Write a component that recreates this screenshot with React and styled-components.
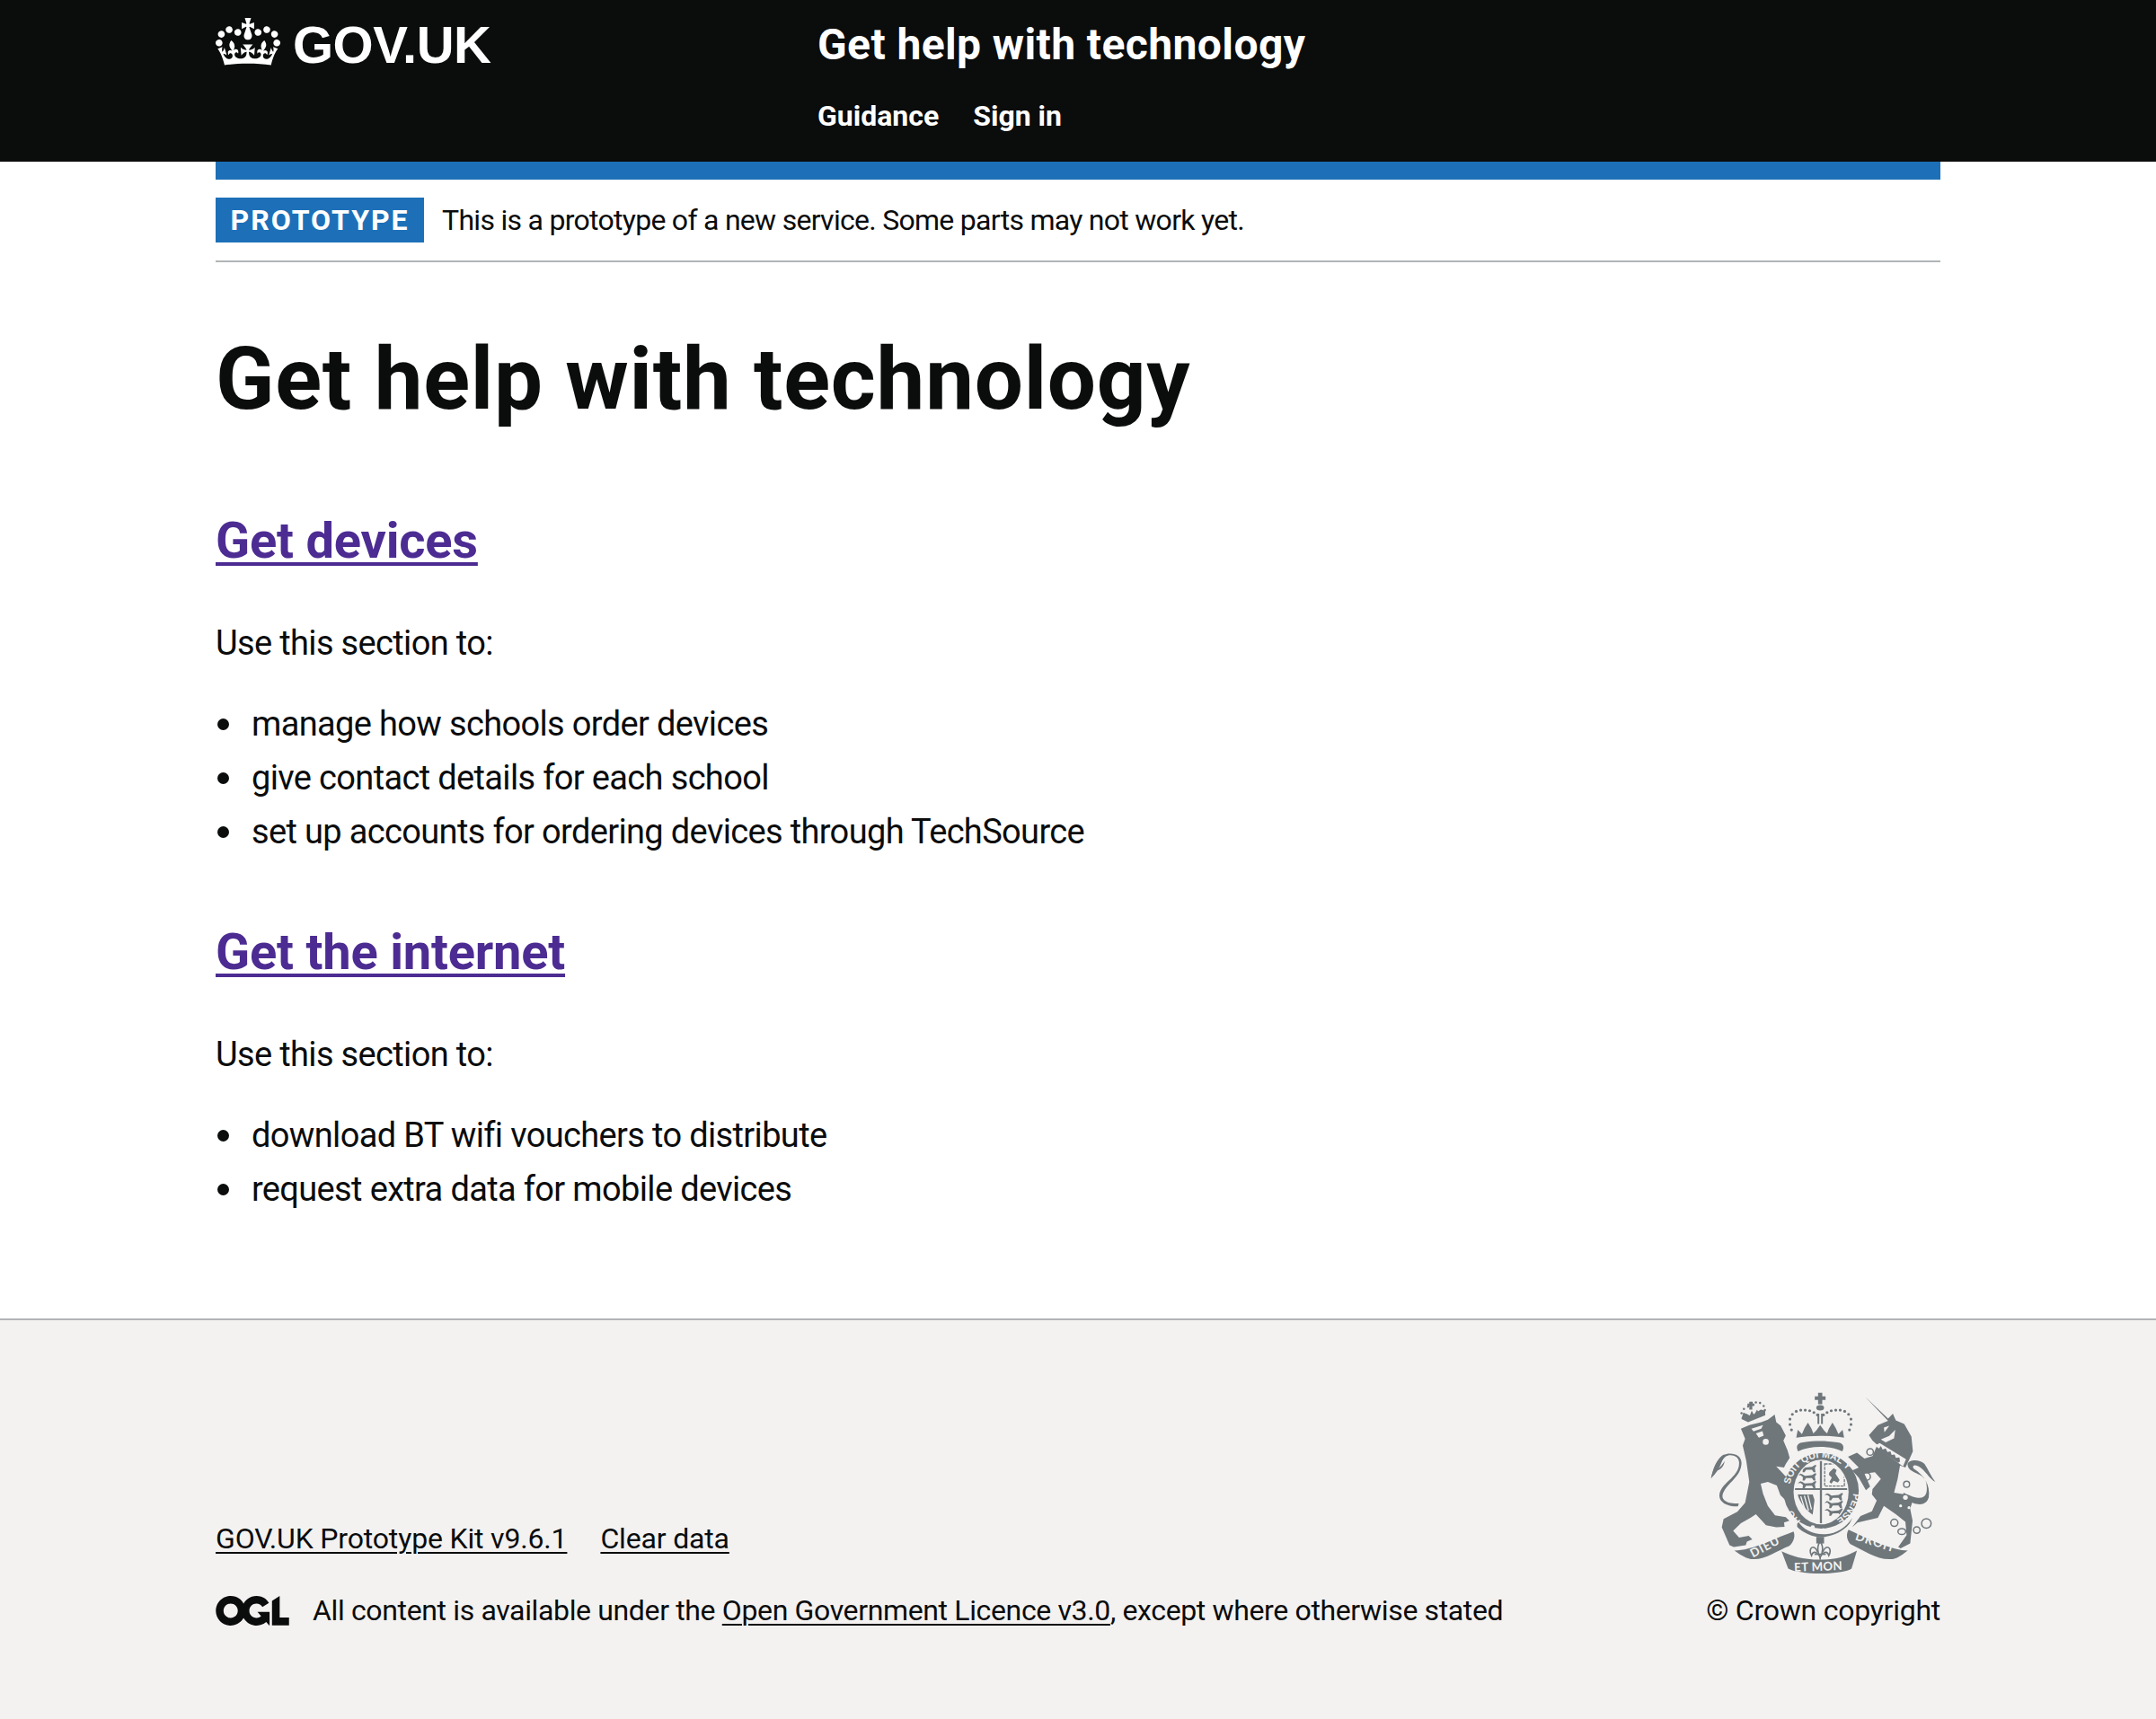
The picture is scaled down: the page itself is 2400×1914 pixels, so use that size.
import React from "react";
import styled, { createGlobalStyle } from "styled-components";

const Global = createGlobalStyle`
  html, body { margin: 0; padding: 0; background: #fff; }
  body { font-family: Roboto, "Noto Sans", "Liberation Sans", sans-serif; color: #0b0c0c; }
`;
const Header = styled.header`background: #0b0c0c; height: 180px; color: #fff;`;
const Width = styled.div`width: 1920px; margin: 0 auto;`;
const HeaderRow = styled(Width)`display: flex; padding-top: 20px;`;
const Logo = styled.a`width: 670px; display: flex; gap: 14px; color: #fff; text-decoration: none; align-items: flex-start;`;
const LogoText = styled.span`font: 700 58px/60px "Liberation Sans", Arial, sans-serif; letter-spacing: -0.5px;`;
const ServiceBlock = styled.div`display: flex; flex-direction: column;`;
const ServiceName = styled.a`font-size: 48px; line-height: 60px; font-weight: 700; color: #fff; text-decoration: none; letter-spacing: 0.4px;`;
const Nav = styled.nav`display: flex; gap: 38px; margin-top: 29px;`;
const NavLink = styled.a`font-size: 32px; line-height: 40px; font-weight: 700; color: #fff; text-decoration: none;`;
const Page = styled(Width)`border-top: 20px solid #1d70b8;`;
const Banner = styled.div`display: flex; align-items: center; gap: 20px; padding: 20px 0; border-bottom: 2px solid #b1b4b6;`;
const Tag = styled.strong`background: #1d70b8; color: #fff; font-size: 32px; line-height: 50px; height: 50px; padding: 0 16.5px; letter-spacing: 2px; font-weight: 700;`;
const BannerText = styled.span`font-size: 32px; line-height: 50px; letter-spacing: -0.72px;`;
const Main = styled.main`padding-top: 70px; height: 1176px; box-sizing: border-box;`;
const Title = styled.h1`margin: 0 0 90px; font-size: 96px; line-height: 120px; font-weight: 700; letter-spacing: 0.75px;`;
const Heading = styled.h2`margin: 0 0 59px; font-size: 56px; line-height: 60px; font-weight: 700; letter-spacing: -0.2px;`;
const HeadingLink = styled.a`color: #4c2c92; text-decoration: underline; text-decoration-thickness: 4px; text-underline-offset: 5px;`;
const Body = styled.p`margin: 0 0 40px; font-size: 38px; line-height: 50px; letter-spacing: -0.65px;`;
const List = styled.ul`margin: 0 0 79px; padding: 0; list-style: none; font-size: 38px; line-height: 50px; letter-spacing: -0.65px;`;
const Item = styled.li`
  display: flex; align-items: center; margin-bottom: 10px;
  &::before { content: ""; width: 13px; height: 13px; border-radius: 50%; background: #0b0c0c; margin: 0 25px 0 2px; flex: none; }
`;
const Footer = styled.footer`background: #f3f2f1; border-top: 2px solid #b1b4b6; height: 446px; box-sizing: border-box;`;
const FooterRow = styled(Width)`display: flex; justify-content: space-between; align-items: flex-end; padding-top: 80px;`;
const FooterLeft = styled.div`display: flex; flex-direction: column;`;
const FooterLinks = styled.div`display: flex; gap: 37px; margin-bottom: 40px; letter-spacing: -0.17px;`;
const FooterLink = styled.a`font-size: 32px; line-height: 40px; color: #0b0c0c; text-decoration: underline; text-decoration-thickness: 2px; text-underline-offset: 4px;`;
const Licence = styled.div`display: flex; align-items: center; gap: 26px; font-size: 32px; line-height: 40px; letter-spacing: -0.36px;`;
const Copyright = styled.div`display: flex; flex-direction: column; align-items: flex-end; gap: 18px;`;
const CopyText = styled.a`font-size: 32px; line-height: 40px; color: #0b0c0c; text-decoration: none; letter-spacing: -0.25px;`;
const CrestSvg = styled.svg`display: block; margin-right: 3px;`;

const CROWN = "M25 30.2c3.5 1.5 7.7-.2 9.1-3.7 1.5-3.6-.2-7.8-3.9-9.2-3.6-1.4-7.6.3-9.1 3.9-1.4 3.5.3 7.5 3.9 9zM9 39.5c3.6 1.5 7.8-.2 9.2-3.7 1.5-3.6-.2-7.8-3.9-9.1-3.6-1.5-7.6.2-9.1 3.8-1.4 3.5.3 7.5 3.8 9zM4.4 57.2c3.5 1.5 7.7-.2 9.1-3.8 1.5-3.6-.2-7.7-3.9-9.1-3.5-1.5-7.6.3-9.1 3.8-1.4 3.5.3 7.6 3.9 9.1zm38.3-21.4c3.5 1.5 7.7-.2 9.1-3.8 1.5-3.6-.2-7.7-3.9-9.1-3.6-1.5-7.6.3-9.1 3.8-1.3 3.6.4 7.7 3.9 9.1zm64.4-5.6c-3.6 1.5-7.8-.2-9.1-3.7-1.5-3.6.2-7.8 3.8-9.2 3.6-1.4 7.7.3 9.2 3.9 1.3 3.5-.4 7.5-3.9 9zm15.9 9.3c-3.6 1.5-7.7-.2-9.1-3.7-1.5-3.6.2-7.8 3.7-9.1 3.6-1.5 7.7.2 9.2 3.8 1.5 3.5-.3 7.5-3.8 9zm4.7 17.7c-3.6 1.5-7.8-.2-9.2-3.8-1.5-3.6.2-7.7 3.9-9.1 3.6-1.5 7.7.3 9.2 3.8 1.3 3.5-.4 7.6-3.9 9.1zM89.3 35.8c-3.6 1.5-7.8-.2-9.2-3.8-1.4-3.6.2-7.7 3.9-9.1 3.6-1.5 7.7.3 9.2 3.8 1.4 3.6-.3 7.7-3.9 9.1zM69.7 17.7l8.9 4.7V9.3l-8.9 2.8c-.2-.3-.5-.6-.9-.9L72.4 0H59.6l3.5 11.2c-.3.3-.6.5-.9.9l-8.8-2.8v13.1l8.8-4.7c.3.3.6.7.9.9l-5 15.4v.1c-.2.8-.4 1.6-.4 2.4 0 4.1 3.1 7.5 7 8.1h.2c.3 0 .7.1 1 .1.4 0 .7 0 1-.1h.2c4-.6 7.1-4.1 7.1-8.1 0-.8-.1-1.7-.4-2.4V34l-5.1-15.4c.4-.2.7-.6 1-.9zM66 92.8c16.9 0 32.8 1.1 47.1 3.2 4-16.9 8.9-26.7 14-33.5l-9.6-3.4c1 4.9 1.1 7.2 0 10.2-1.5-1.4-3-4.3-4.2-8.7L108.6 76c2.8-2 5-3.2 7.5-3.3-4.4 9.4-10 11.9-13.6 11.2-4.3-.8-6.3-4.6-5.6-7.9 1-4.7 5.7-5.9 8-.5 4.3-8.7-3-11.4-7.6-8.8 7.1-7.2 7.9-13.5 2.1-21.1-8 6.1-8.1 12.3-4.5 20.8-4.7-5.4-12.1-2.5-9.5 6.2 3.4-5.2 7.9-2 7.2 3.1-.6 4.3-6.4 7.8-13.5 7.2-10.3-.9-10.9-8-11.2-13.8 2.5-.5 7.1 1.8 11 7.3L80.2 60c-4.1 4.4-8 5.3-12.3 5.4 1.4-4.4 8-11.6 8-11.6H55.5s6.4 7.2 7.9 11.6c-4.2-.1-8-1-12.3-5.4l1.4 16.4c3.9-5.5 8.5-7.7 10.9-7.3-.3 5.8-.9 12.8-11.1 13.8-7.2.6-12.9-2.9-13.5-7.2-.7-5 3.8-8.3 7.1-3.1 2.7-8.7-4.6-11.6-9.4-6.2 3.7-8.5 3.6-14.7-4.6-20.8-5.8 7.6-5 13.9 2.2 21.1-4.7-2.6-11.9.1-7.7 8.8 2.3-5.5 7.1-4.2 8.1.5.7 3.3-1.3 7.1-5.7 7.9-3.5.7-9-1.8-13.5-11.2 2.5.1 4.7 1.3 7.5 3.3l-4.7-15.4c-1.2 4.4-2.7 7.2-4.3 8.7-1.1-3-.9-5.3 0-10.2l-9.5 3.4c5 6.9 9.9 16.7 14 33.5 14.8-2.1 30.8-3.2 47.7-3.2z";
const OGL = "M421.5 142.8V.1l-50.7 32.3v161.1h112.4v-50.7zm-122.3-9.6A47.12 47.12 0 0 1 221 97.8c0-26 21.1-47.1 47.1-47.1 16.7 0 31.4 8.7 39.7 21.8l42.7-27.2A97.63 97.63 0 0 0 268.1 0c-36.5 0-68.3 20.1-85.1 49.7A98 98 0 0 0 97.8 0C43.9 0 0 43.9 0 97.8s43.9 97.8 97.8 97.8c36.5 0 68.3-20.1 85.1-49.7a97.76 97.76 0 0 0 149.6 25.4l19.4 22.2h3v-87.8h-80l24.3 27.5zM97.8 145c-26 0-47.1-21.1-47.1-47.1s21.1-47.1 47.1-47.1 47.2 21 47.2 47S123.8 145 97.8 145";

const lionPass = (x, y, s = 1) => `M${x},${y + 6 * s} l${8 * s},${-6 * s} l${6 * s},${2 * s} l${8 * s},${5 * s} l${22 * s},${-2 * s} l${10 * s},${-6 * s} l${4 * s},${2 * s} l${-5 * s},${8 * s} l${2 * s},${13 * s} l${-6 * s},0 l${-5 * s},${-8 * s} l${-18 * s},0 l${-5 * s},${8 * s} l${-6 * s},0 l${1 * s},${-11 * s} l${-7 * s},${-6 * s} Z`;

const Crest = () => {
  const dark = "#6f777b", light = "#f3f2f1";
  const arch = [[341,186],[336,168],[336,150],[344,134],[357,124],[372,120],[387,120],[402,122],[416,128],[428,136],[448,136],[460,128],[474,122],[489,120],[504,120],[519,124],[532,134],[540,150],[540,168],[535,186]];
  const mini = [[178,146],[174,130],[182,116],[196,108],[208,96],[222,94],[236,96],[248,106],[252,120],[250,134]];
  return (
    <CrestSvg width="253" height="205" viewBox="70 60 760 615">
      <g fill={dark}>
        <path d="M172,182 L200,170 L240,160 L262,152 L285,135 L290,160 L305,172 L322,205 L314,222 L328,255 L335,280 L322,300 L316,312 L290,308 L322,342 L338,385 L348,405 L338,424 L322,422 L304,404 L292,372 L262,360 L238,366 L246,400 L262,440 L286,472 L322,478 L334,490 L316,496 L318,510 L290,512 L256,505 L222,468 L204,480 L172,498 L146,524 L166,546 L198,540 L210,552 L192,560 L188,572 L148,578 L134,572 L108,512 L114,484 L160,460 L186,430 L200,360 L190,290 L178,238 L186,216 Z" />
        <path d="M174,150 L180,128 L206,140 L238,118 L254,122 L252,138 L196,160 Z" />
        <path d="M162,442 C118,444 84,420 108,382 C128,352 166,336 166,296 C166,272 135,265 120,276 C104,290 92,325 72,348 C80,318 90,285 112,270 C140,258 175,268 174,298 C172,340 136,358 116,390 C98,420 125,434 165,432 Z" />
        <path d="M72,348 C78,316 92,282 115,270 C108,290 106,315 72,348 Z" />
        <path d="M85,322 C100,316 108,304 118,290 C114,310 104,322 85,322 Z" />
        <path d="M588,76 L664,148 L680,132 L690,154 L718,166 L742,208 L747,258 L735,285 L722,312 L704,305 L696,350 L684,396 L722,402 L746,424 L738,450 L746,490 L738,566 L706,582 L698,578 L726,538 L722,494 L690,468 L650,440 L630,480 L562,496 L544,512 L572,474 L610,458 L626,422 L610,402 L612,384 L640,350 L620,328 L585,332 L604,376 L590,388 L566,346 L544,322 L566,312 L530,276 L560,262 L585,282 L612,274 L628,236 L612,222 L600,204 L630,170 L664,156 Z" />
        <path d="M716,396 C782,430 800,412 792,364 C785,326 730,335 729,300 C735,284 770,284 786,300 C798,318 808,342 822,360 C804,350 794,330 775,314 C755,298 742,304 750,316 C786,340 806,372 800,412 C790,444 758,440 712,414 Z" />
      </g>
      <g fill={light}>
        <circle cx="255" cy="226" r="10" />
        <path d="M207,182 L246,170 L240,182 L214,191 Z" />
        <path d="M222,198 L244,190 L248,205 L232,212 Z" />
        <path d="M650,178 L668,172 L652,194 Z" />
        <path d="M640,218 L668,206 L688,186 L684,214 L656,228 Z" />
        <path d="M620,238 L636,230 L724,284 L714,308 Z" />
        <circle cx="722" cy="412" r="8" />
        <circle cx="706" cy="440" r="5" />
        <circle cx="734" cy="446" r="5" />
      </g>
      <path d="M632,250 l8,-10 l6,12 l10,-4 l6,12 l10,-2 l4,12 l10,-2 l4,12 l12,-2 l2,14 l-6,4 Z" fill={dark} />
      <g fill="none" stroke={dark} strokeWidth="4.5">
        <circle cx="604" cy="260" r="11" />
        <circle cx="592" cy="342" r="13" />
        <circle cx="726" cy="368" r="10" />
        <circle cx="685" cy="497" r="12" />
        <ellipse cx="710" cy="526" rx="13" ry="10" />
        <circle cx="760" cy="521" r="11" />
        <circle cx="792" cy="499" r="16" />
      </g>
      <g fill={dark}>
        {mini.map(([x, y], i) => <circle key={i} cx={x} cy={y} r="3.8" />)}
        <path d="M200,92 h10 v6 h7 v8 h-7 v12 h-10 v-12 h-6 v-8 h6 Z" />
        <path d="M185,148 L192,132 L200,142 L208,122 L216,136 L226,118 L232,130 L244,118 L244,134 Z" />
      </g>
      <g fill={dark}>
        {arch.map(([x, y], i) => <circle key={i} cx={x} cy={y} r="4.8" />)}
        <path d="M430,62 h14 v12 h11 v12 h-11 v14 h-14 v-14 h-11 v-12 h11 Z" />
        <ellipse cx="437" cy="112" rx="13" ry="9" />
        <path d="M428,132 h6 v34 h-6 Z M440,132 h6 v34 h-6 Z" />
        <path d="M357,212 L362,186 L376,200 L385,180 L396,162 L408,182 L414,198 L424,188 L437,170 L450,188 L460,198 L466,182 L478,162 L489,180 L498,200 L512,186 L517,212 C470,204 404,204 357,212 Z" />
        <path d="M363,258 C354,240 362,230 380,228 C420,222 455,222 494,228 C512,230 520,240 511,258 C470,238 404,238 363,258 Z" />
      </g>
      <circle cx="440" cy="390" r="126" fill={dark} />
      <path d="M360,488 C380,520 410,535 448,535 C490,535 520,515 545,480 L535,500 C510,530 480,540 445,545 C410,545 380,530 360,510 Z" fill={dark} />
      <circle cx="412" cy="512" r="7" fill={light} />
      <circle cx="448" cy="522" r="7" fill={light} />
      <ellipse cx="440" cy="394" rx="92" ry="108" fill={light} />
      <defs>
        <path id="garter" d="M 336 372 A 106 106 0 0 1 548 400" />
        <path id="garterr" d="M 548 398 A 106 106 0 0 1 480 490" />
        <path id="garterl" d="M 372 490 A 106 106 0 0 1 334 400" />
        <clipPath id="oval"><ellipse cx="440" cy="394" rx="88" ry="104" /></clipPath>
      </defs>
      <g fill={light} fontFamily="'Liberation Sans', sans-serif" fontSize="32" fontWeight="700">
        <text><textPath href="#garter" startOffset="4">SOIT QUI MAL Y</textPath></text>
        <text><textPath href="#garterr" startOffset="0">PENSE</textPath></text>
        <text><textPath href="#garterl" startOffset="0">HO</textPath></text>
      </g>
      <g clipPath="url(#oval)">
        <path d="M436,286 h7 v218 h-7 Z M340,381 h200 v6 h-200 Z" fill={dark} />
        <g fill={dark}>
          {[304, 332, 358].map(y => <path key={y} d={lionPass(362, y, 1.08)} />)}
          {[398, 424, 450].map(y => <path key={y} d={lionPass(451, y, 1.08)} />)}
        </g>
        <path d="M452,300 H518 V374 H452 Z" fill="none" stroke={dark} strokeWidth="4" strokeDasharray="10 3" />
        <path d="M468,328 l14,-14 l10,6 l-4,12 l14,22 l-6,8 l-14,-6 l-8,10 l-6,-6 l8,-14 l-10,-10 Z" fill={dark} />
        <path d="M362,402 H412 L418,420 L412,470 C392,456 368,430 362,402 Z" fill={dark} />
        <path d="M372,408 L386,452 M384,406 L398,456 M396,404 L408,452" stroke={light} strokeWidth="4" fill="none" />
      </g>
      <g fill={dark}>
        <path d="M150,590 C212,588 268,556 348,526 C354,540 350,560 334,574 C292,590 250,624 205,618 C185,615 165,600 150,590 Z" />
        <path d="M730,590 C680,588 610,558 532,520 C524,532 524,552 538,568 C585,590 630,624 680,618 C700,615 715,600 730,590 Z" />
        <path d="M308,592 C345,608 375,620 437,620 C500,620 528,606 560,590 L542,650 C510,672 368,672 330,650 Z" />
      </g>
      <g fill={light} fontFamily="Lato, 'Liberation Sans', sans-serif" fontSize="40" fontWeight="700">
        <text transform="translate(212 614) rotate(-28)" letterSpacing="3">DIEU</text>
        <text transform="translate(350 660) rotate(-2)" letterSpacing="1">ET MON</text>
        <text transform="translate(552 553) rotate(18)" letterSpacing="3">DROIT</text>
      </g>
      <path d="M424,544 h26 v22 h-26 Z" fill={dark} />
      <g fill="none" stroke={dark} strokeWidth="5">
        <path d="M437,560 C425,575 428,600 437,612 C446,600 449,575 437,560 Z" />
        <path d="M428,594 C418,566 394,580 408,606 C412,594 420,592 428,600" />
        <path d="M446,594 C456,566 480,580 466,606 C462,594 454,592 446,600" />
        <path d="M418,602 H456" />
        <path d="M437,612 v8" />
      </g>
    </CrestSvg>
  );
};

export default function App() {
  return (
    <>
      <Global />
      <Header>
        <HeaderRow>
          <Logo href="#">
            <svg width="72" height="53" viewBox="0 0 132 97" fill="#fff"><path fillRule="evenodd" d={CROWN} /></svg>
            <LogoText>GOV.UK</LogoText>
          </Logo>
          <ServiceBlock>
            <ServiceName href="#">Get help with technology</ServiceName>
            <Nav>
              <NavLink href="#">Guidance</NavLink>
              <NavLink href="#">Sign in</NavLink>
            </Nav>
          </ServiceBlock>
        </HeaderRow>
      </Header>
      <Page>
        <Banner>
          <Tag>PROTOTYPE</Tag>
          <BannerText>This is a prototype of a new service. Some parts may not work yet.</BannerText>
        </Banner>
        <Main>
          <Title>Get help with technology</Title>
          <Heading><HeadingLink href="#">Get devices</HeadingLink></Heading>
          <Body>Use this section to:</Body>
          <List>
            <Item>manage how schools order devices</Item>
            <Item>give contact details for each school</Item>
            <Item>set up accounts for ordering devices through TechSource</Item>
          </List>
          <Heading><HeadingLink href="#">Get the internet</HeadingLink></Heading>
          <Body>Use this section to:</Body>
          <List>
            <Item>download BT wifi vouchers to distribute</Item>
            <Item>request extra data for mobile devices</Item>
          </List>
        </Main>
      </Page>
      <Footer>
        <FooterRow>
          <FooterLeft>
            <FooterLinks>
              <FooterLink href="#">GOV.UK Prototype Kit v9.6.1</FooterLink>
              <FooterLink href="#">Clear data</FooterLink>
            </FooterLinks>
            <Licence>
              <svg width="82" height="33" viewBox="0 0 483.2 195.7" fill="#0b0c0c"><path d={OGL} /></svg>
              <span>All content is available under the <FooterLink href="#">Open Government Licence v3.0</FooterLink>, except where otherwise stated</span>
            </Licence>
          </FooterLeft>
          <Copyright>
            <Crest />
            <CopyText href="#">© Crown copyright</CopyText>
          </Copyright>
        </FooterRow>
      </Footer>
    </>
  );
}
